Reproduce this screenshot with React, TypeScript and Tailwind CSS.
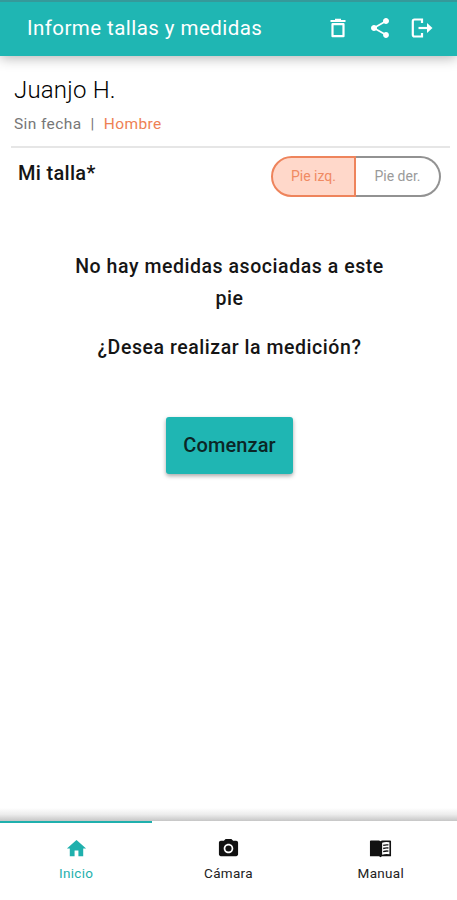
import { MdCameraAlt, MdHome, MdShare } from 'react-icons/md';

function TrashIcon() {
  return (
    <svg viewBox="0 0 24 24" className="h-6 w-6" fill="none" stroke="currentColor" strokeWidth="2.200">
      <path d="M4.500 5H19.500M9 3.800H15" />
      <path d="M6.500 8.200H17.500V20.200H6.500Z" strokeLinejoin="round" />
    </svg>
  );
}

function ExitIcon() {
  return (
    <svg viewBox="0 0 24 24" className="h-6 w-6" fill="none" stroke="currentColor" strokeWidth="2.200">
      <path d="M12 7V3.500H4.500Q2.800 3.500 2.800 5.200V18.800Q2.800 20.500 4.500 20.500H12V17" />
      <path d="M8.500 12H19" />
      <path d="M17 7L22.500 12L17 17Z" fill="currentColor" stroke="none" />
    </svg>
  );
}

function ManualIcon({ className }: { className?: string }) {
  return (
    <svg viewBox="0 0 24 24" className={className} fill="none">
      <path d="M1 4.500Q1 3.700 2 3.700H10.500L12 4.500L13.500 3.700H22Q23 3.700 23 4.500V20H13.500L12 21L10.500 20H1Z" fill="currentColor" />
      <path d="M13.700 6Q17 4.600 21.300 5.500V18Q17 17.300 13.700 18.600Z" fill="#fff" />
      <path d="M14.800 8.800Q17.500 7.900 20.300 8.300M14.800 12Q17.500 11.100 20.300 11.500M14.800 15.200Q17.500 14.300 20.300 14.700" stroke="currentColor" strokeWidth="1.400" />
    </svg>
  );
}

const tabs = [
  { label: 'Inicio', icon: MdHome, active: true },
  { label: 'Cámara', icon: MdCameraAlt, active: false },
  { label: 'Manual', icon: ManualIcon, active: false },
];

function Header() {
  return (
    <header className="flex h-14 shrink-0 items-center border-t-2 border-[#35999a] bg-[#1fb6b3] pr-[23px] pl-[27px] text-white shadow-[0_2px_12px_rgba(0,0,0,0.3)]">
      <h1 className="pb-[2px] text-[20.5px] tracking-[0.44px] whitespace-nowrap">Informe tallas y medidas</h1>
      <div className="ml-auto flex items-center gap-[18px] pb-[2px]">
        <TrashIcon />
        <MdShare className="h-6 w-6" />
        <ExitIcon />
      </div>
    </header>
  );
}

function FootToggle() {
  return (
    <div className="flex h-[41px] w-[170px] text-[14px]">
      <button className="w-[85px] rounded-l-full border-2 border-[#ee845c] bg-[#ffd8ca] text-[#f08a62]">Pie izq.</button>
      <button className="w-[85px] rounded-r-full border-2 border-l-0 border-[#929292] text-[#9a9a9a]">Pie der.</button>
    </div>
  );
}

function TabBar() {
  return (
    <nav className="grid h-[79px] shrink-0 grid-cols-3 bg-white">
      {tabs.map(({ label, icon: Icon, active }) => (
        <button
          key={label}
          className={`flex flex-col items-center border-t-2 pt-[14px] text-[13.5px] leading-4 tracking-[0.3px] ${
            active ? 'border-[#1fb0ad] text-[#1fb0ad]' : 'border-transparent text-[#222]'
          }`}
        >
          <Icon className={active ? 'h-[23px] w-[23px]' : 'h-[23px] w-[23px] text-[#111]'} />
          <span className="mt-[5px]">{label}</span>
        </button>
      ))}
    </nav>
  );
}

export default function App() {
  return (
    <div className="flex h-[900px] w-[457px] flex-col overflow-hidden bg-white font-['Roboto',sans-serif] text-[#151515]">
      <Header />

      <section className="mr-[7px] ml-[11px] h-[92px] border-b-2 border-[#e6e6e6] pt-[18px] pl-[3px]">
        <h2 className="text-[24px] leading-8 font-light tracking-[0.2px] text-black">Juanjo H.</h2>
        <p className="mt-2 flex text-[15.5px] leading-5 tracking-[0.4px] text-[#777]">
          <span>Sin fecha</span>
          <span className="mx-[9px]">|</span>
          <span className="text-[#ee8154]">Hombre</span>
        </p>
      </section>

      <section className="flex items-start justify-between pt-2 pr-4 pl-[18px]">
        <h3 className="pt-[3px] text-[20px] leading-7 font-medium tracking-[0.3px]">Mi talla*</h3>
        <FootToggle />
      </section>

      <main className="flex flex-1 flex-col items-center pt-[54px] pl-[2px] text-center text-[19.5px] leading-8 font-medium">
        <p className="w-[330px] tracking-[0.55px]">
          No hay medidas asociadas a este
          <br />
          pie
        </p>
        <p className="mt-[17px] tracking-[0.55px]">¿Desea realizar la medición?</p>
        <button className="mt-[53px] h-[57px] w-[127px] rounded-[3px] bg-[#1fb6b3] pb-[2px] text-[20px] tracking-[0.1px] text-[#0b2626] shadow-[0_2px_4px_rgba(0,0,0,0.35)]">
          Comenzar
        </button>
      </main>

      <div className="h-[13px] shrink-0 bg-linear-to-b from-white via-[#ececec] to-[#c6c6c6]" />
      <TabBar />
    </div>
  );
}
